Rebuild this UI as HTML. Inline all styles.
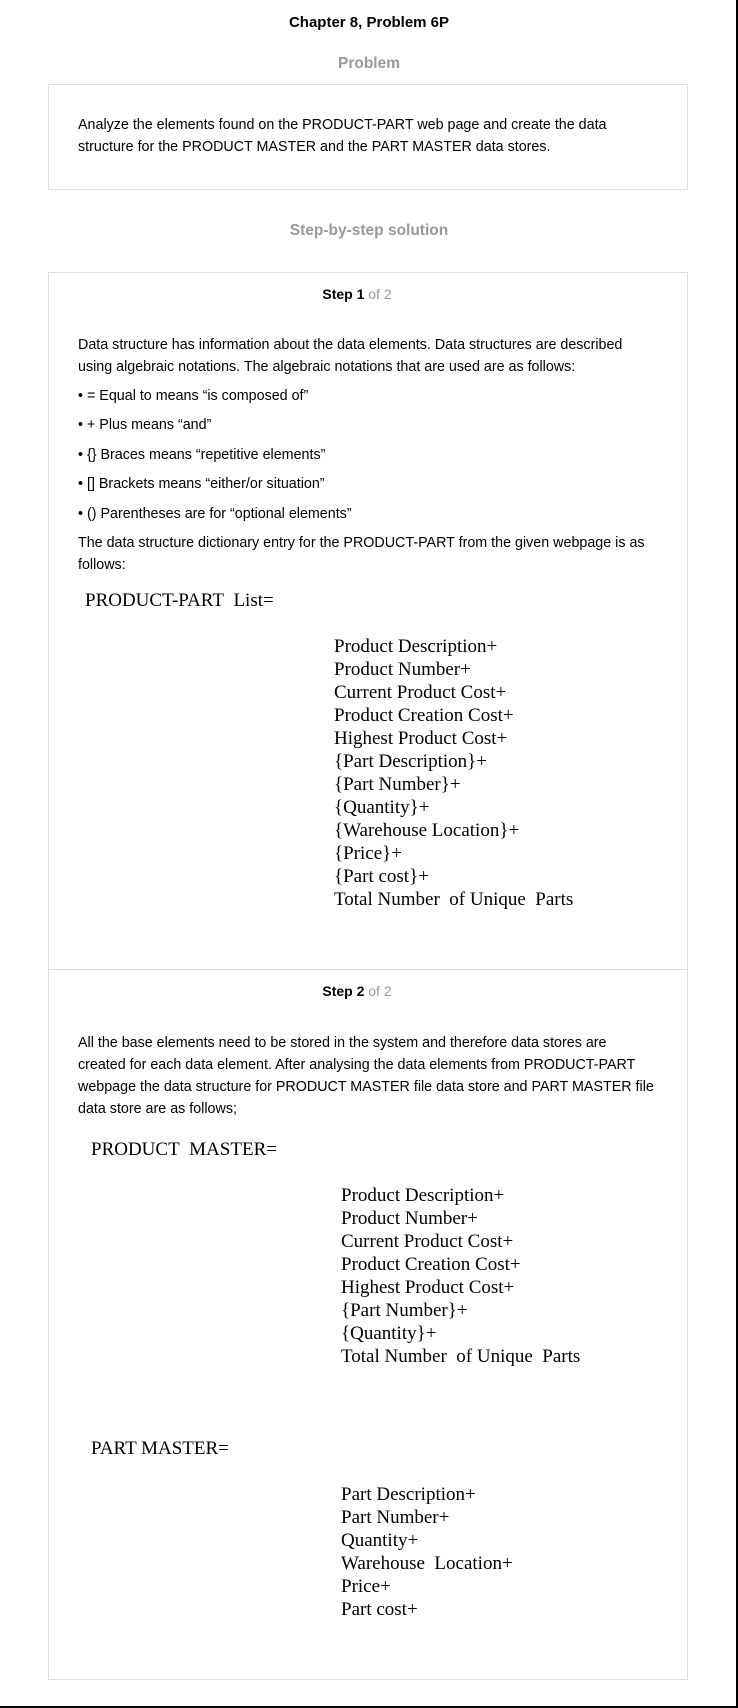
<!DOCTYPE html>
<html><head><meta charset="utf-8"><style>
html,body{margin:0;padding:0;background:#fff;}
body{width:738px;height:1708px;position:relative;overflow:hidden;font-family:"Liberation Sans",Arial,sans-serif;color:#000;}
.frame{position:absolute;left:0;top:0;width:736px;height:1706px;border-right:2px solid #000;border-bottom:2px solid #000;}
.a{position:absolute;white-space:nowrap;}
.c{left:0;width:738px;text-align:center;}
.t{font-size:14.3px;line-height:22px;left:78px;}
.s{font-family:"Liberation Serif","Times New Roman",serif;font-size:19px;line-height:23px;}
.box{position:absolute;left:48px;width:638px;border:1px solid #ddd;}
.g{color:#999;}
</style></head><body>
<div class="frame"></div>
<div class="a c" style="top:14px;font-size:15px;font-weight:bold;">Chapter 8, Problem 6P</div>
<div class="a c g" style="top:55px;font-size:15.5px;font-weight:bold;">Problem</div>
<div class="box" style="top:84px;height:104px;"></div>
<div class="a t" style="top:114px;">Analyze the elements found on the PRODUCT-PART web page and create the data<br>structure for the PRODUCT MASTER and the PART MASTER data stores.</div>
<div class="a c g" style="top:222px;font-size:15.5px;font-weight:bold;">Step-by-step solution</div>
<div class="box" style="top:272px;height:1406px;"></div>
<div style="position:absolute;left:49px;width:638px;top:969px;height:1px;background:#ddd;"></div>
<div class="a c" style="top:286px;font-size:14px;left:-12px;"><b>Step 1</b> <span class="g">of 2</span></div>
<div class="a t" style="top:334px;">Data structure has information about the data elements. Data structures are described<br>using algebraic notations. The algebraic notations that are used are as follows:</div>
<div class="a t" style="top:385px;">• = Equal to means “is composed of”</div>
<div class="a t" style="top:414px;">• + Plus means “and”</div>
<div class="a t" style="top:444px;">• {} Braces means “repetitive elements”</div>
<div class="a t" style="top:473px;">• [] Brackets means “either/or situation”</div>
<div class="a t" style="top:503px;">• () Parentheses are for “optional elements”</div>
<div class="a t" style="top:532px;">The data structure dictionary entry for the PRODUCT-PART from the given webpage is as<br>follows:</div>
<div class="a s" style="top:589px;left:85px;">PRODUCT-PART&nbsp; List=</div>
<div class="a s" style="top:635px;left:334px;">Product Description+<br>Product Number+<br>Current Product Cost+<br>Product Creation Cost+<br>Highest Product Cost+<br>{Part Description}+<br>{Part Number}+<br>{Quantity}+<br>{Warehouse Location}+<br>{Price}+<br>{Part cost}+<br>Total Number&nbsp; of Unique&nbsp; Parts</div>
<div class="a c" style="top:983px;font-size:14px;left:-12px;"><b>Step 2</b> <span class="g">of 2</span></div>
<div class="a t" style="top:1032px;">All the base elements need to be stored in the system and therefore data stores are<br>created for each data element. After analysing the data elements from PRODUCT-PART<br>webpage the data structure for PRODUCT MASTER file data store and PART MASTER file<br>data store are as follows;</div>
<div class="a s" style="top:1138px;left:91px;">PRODUCT&nbsp; MASTER=</div>
<div class="a s" style="top:1184px;left:341px;">Product Description+<br>Product Number+<br>Current Product Cost+<br>Product Creation Cost+<br>Highest Product Cost+<br>{Part Number}+<br>{Quantity}+<br>Total Number&nbsp; of Unique&nbsp; Parts</div>
<div class="a s" style="top:1437px;left:91px;">PART MASTER=</div>
<div class="a s" style="top:1483px;left:341px;">Part Description+<br>Part Number+<br>Quantity+<br>Warehouse&nbsp; Location+<br>Price+<br>Part cost+</div>
</body></html>
